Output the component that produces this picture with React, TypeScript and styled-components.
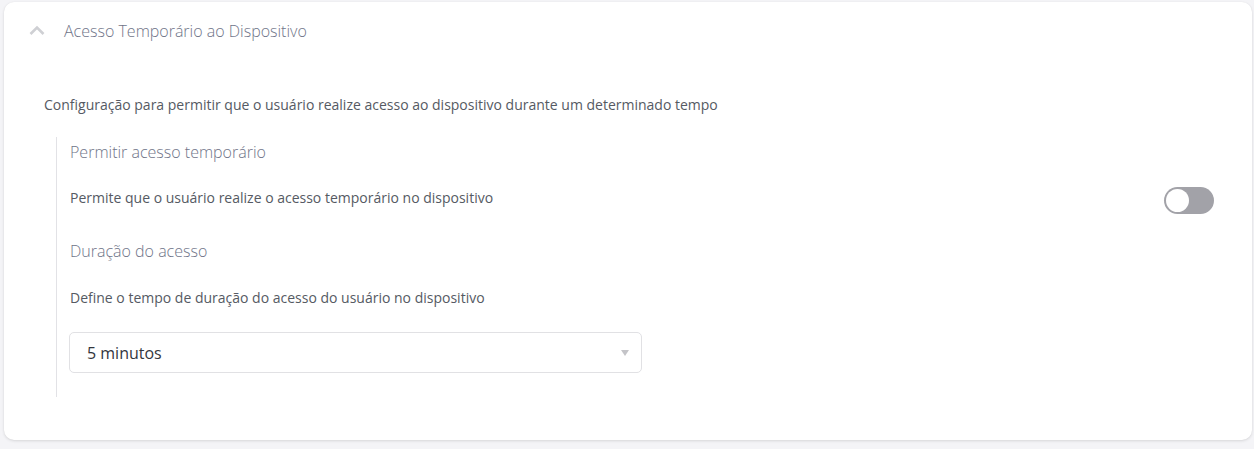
import React, { useState } from "react";
import styled, { createGlobalStyle } from "styled-components";

const Global = createGlobalStyle`
  html, body { margin: 0; padding: 0; background: #f4f4f7; }
  body { font-family: "Open Sans", "Noto Sans", sans-serif; }
  * { box-sizing: border-box; }
`;

const Page = styled.div`
  padding: 2px 2px 9px 4px;
`;

const Card = styled.section`
  background: #ffffff;
  border-radius: 10px;
  box-shadow: 0 1px 3px rgba(0, 0, 0, 0.12), 0 0 1px rgba(0, 0, 0, 0.06);
  min-height: 438px;
  padding: 0 38px 0 0;
`;

const Header = styled.div`
  display: flex;
  align-items: center;
  height: 58px;
  padding-left: 24px;
`;

const Chevron = styled.svg`
  width: 18px;
  height: 18px;
  margin-right: 18px;
`;

const Title = styled.h2`
  margin: 0;
  font-size: 16px;
  font-weight: 300;
  color: #6f7488;
`;

const Body = styled.div`
  padding: 35px 0 0 40px;
`;

const Description = styled.p`
  margin: 0;
  font-size: 14px;
  line-height: 20px;
  color: #555a63;
`;

const Group = styled.div`
  margin: 22px 0 43px 12px;
  border-left: 1px solid #e2e2e6;
  padding: 3px 0 24px 13px;
`;

const SubTitle = styled.h3`
  margin: 0;
  font-size: 16px;
  line-height: 24px;
  font-weight: 300;
  color: #6f7488;
`;

const Row = styled.div<{ $mt: number; $mb: number }>`
  display: flex;
  align-items: center;
  justify-content: space-between;
  margin: ${(p) => `${p.$mt}px 0 ${p.$mb}px`};
`;

const Hint = styled.span`
  font-size: 14px;
  line-height: 20px;
  color: #555a63;
`;

const Switch = styled.button<{ $on: boolean }>`
  position: relative;
  width: 50px;
  height: 27px;
  margin-top: 5px;
  border: none;
  border-radius: 14px;
  padding: 0;
  background: ${(p) => (p.$on ? "#3b82f6" : "#a2a2a8")};
  cursor: pointer;
  &::after {
    content: "";
    position: absolute;
    top: 2px;
    left: ${(p) => (p.$on ? "25px" : "2px")};
    width: 23px;
    height: 23px;
    border-radius: 50%;
    background: #ffffff;
    transition: left 0.15s;
  }
`;

const Select = styled.div`
  display: flex;
  align-items: center;
  justify-content: space-between;
  width: 573px;
  height: 41px;
  margin-left: -1px;
  border: 1px solid #e1e1e4;
  border-radius: 5px;
  padding: 0 12px 0 17px;
  font-size: 16px;
  color: #33363d;
`;

const Caret = styled.span`
  width: 0;
  height: 0;
  border-left: 4.5px solid transparent;
  border-right: 4.5px solid transparent;
  border-top: 6px solid #c4c4c8;
`;

export default function App() {
  const [on, setOn] = useState(false);
  return (
    <>
      <Global />
      <Page>
        <Card>
          <Header>
            <Chevron viewBox="0 0 18 18">
              <path d="M2.5 12 L9 5.5 L15.5 12" fill="none" stroke="#cfd0d4" strokeWidth="2.6" />
            </Chevron>
            <Title>Acesso Temporário ao Dispositivo</Title>
          </Header>
          <Body>
            <Description>
              Configuração para permitir que o usuário realize acesso ao dispositivo durante um determinado tempo
            </Description>
            <Group>
              <SubTitle>Permitir acesso temporário</SubTitle>
              <Row $mt={18} $mb={25}>
                <Hint>Permite que o usuário realize o acesso temporário no dispositivo</Hint>
                <Switch $on={on} onClick={() => setOn(!on)} aria-label="toggle" />
              </Row>
              <SubTitle>Duração do acesso</SubTitle>
              <Row $mt={25} $mb={24}>
                <Hint>Define o tempo de duração do acesso do usuário no dispositivo</Hint>
              </Row>
              <Select>
                <span>5 minutos</span>
                <Caret />
              </Select>
            </Group>
          </Body>
        </Card>
      </Page>
    </>
  );
}
